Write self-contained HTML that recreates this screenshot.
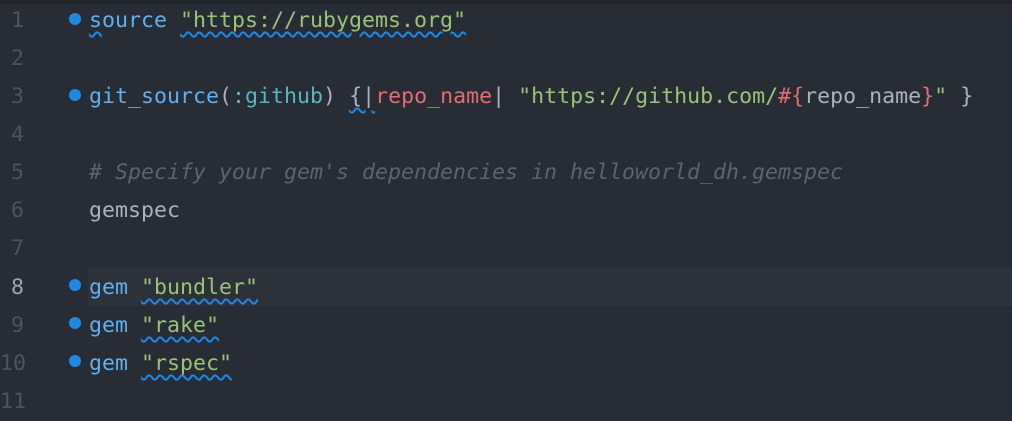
<!DOCTYPE html>
<html><head><meta charset="utf-8"><style>
body{margin:0;width:1012px;height:414px;background:#282c34;overflow:hidden;position:relative;font-family:"DejaVu Sans Mono","Liberation Mono",monospace;font-size:21.6px}
.top{position:absolute;left:0;top:0;width:1012px;height:4px;background:#21252b}
.hl{position:absolute;left:88px;right:0;height:38px;background:#2c313a}
.ln{position:absolute;left:0;width:24px;text-align:right;color:#4b5263;height:38px;line-height:38px}
.cd{position:absolute;left:89px;white-space:pre;color:#abb2bf;height:38px;line-height:38px}
.dot{position:absolute;left:69px;width:12px;height:12px;border-radius:50%;background:#1e88e5}
.k{color:#61afef}.s{color:#98c379}.c{color:#56b6c2}.r{color:#e06c75}.cm{color:#5c6370;font-style:italic}
.w{text-decoration:underline wavy #1e88e5;text-decoration-thickness:1.5px;text-underline-offset:4px}
</style></head><body>
<div class="top"></div>
<div class="hl" style="top:268px"></div>
<div class="ln" style="top:2px">1</div>
<div class="ln" style="top:40px">2</div>
<div class="ln" style="top:78px">3</div>
<div class="ln" style="top:116px">4</div>
<div class="ln" style="top:154px">5</div>
<div class="ln" style="top:192px">6</div>
<div class="ln" style="top:230px">7</div>
<div class="ln" style="top:269px;color:#9da5b4">8</div>
<div class="ln" style="top:307px">9</div>
<div class="ln" style="top:345px">10</div>
<div class="ln" style="top:383px">11</div>
<div class="dot" style="top:13px"></div>
<div class="dot" style="top:89px"></div>
<div class="dot" style="top:279px"></div>
<div class="dot" style="top:317px"></div>
<div class="dot" style="top:355px"></div>
<div class="cd" style="top:2px"><span class="k"><span class="w">s</span>ource</span> <span class="s w">"https://rubygems.org"</span></div>
<div class="cd" style="top:78px"><span class="k">git_source</span>(<span class="c">:github</span>) <span class="w">{|</span><span class="r">repo_name</span>| <span class="s">"https://github.com/</span><span class="r">#{</span>repo_name<span class="r">}</span><span class="s">"</span> }</div>
<div class="cd cm" style="top:154px"># Specify your gem's dependencies in helloworld_dh.gemspec</div>
<div class="cd" style="top:192px">gemspec</div>
<div class="cd" style="top:269px"><span class="k">gem</span> <span class="s w">"bundler"</span></div>
<div class="cd" style="top:307px"><span class="k">gem</span> <span class="s w">"rake"</span></div>
<div class="cd" style="top:345px"><span class="k">gem</span> <span class="s w">"rspec"</span></div>
</body></html>
